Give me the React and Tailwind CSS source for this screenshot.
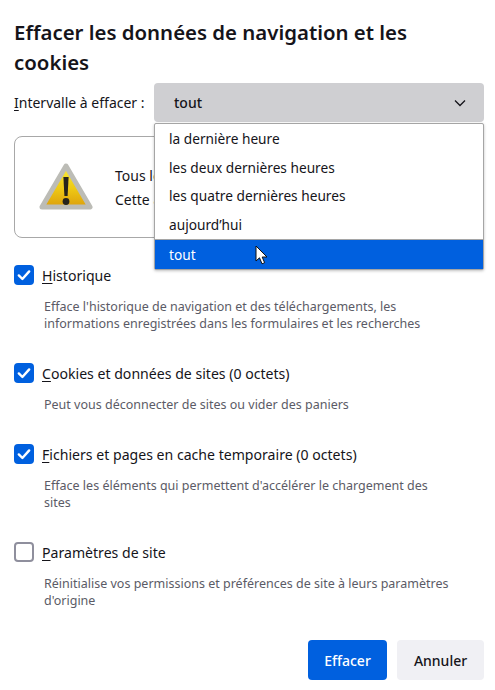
import React from "react";

function Check({ checked }) {
  if (!checked)
    return <span className="w-5 h-5 shrink-0 rounded-[4px] border-2 border-[#8f8f9d] bg-white" />;
  return (
    <span className="w-5 h-5 shrink-0 rounded-[4px] bg-[#0060df] flex items-center justify-center">
      <svg width="14" height="14" viewBox="0 0 14 14" fill="none">
        <path d="M1.8 7.4 L5.4 11 L12.2 3.4" stroke="white" strokeWidth="2.4" strokeLinecap="round" strokeLinejoin="round" />
      </svg>
    </span>
  );
}

function Item({ checked, k, rest, desc }) {
  return (
    <div className="mb-[31px]">
      <div className="flex items-center h-5 gap-2">
        <Check checked={checked} />
        <span className="pt-[2px] text-[14.1px] leading-5 text-[#15141a] whitespace-nowrap">
          <span className="underline underline-offset-2">{k}</span>
          {rest}
        </span>
      </div>
      <p className="mt-[13px] ml-[30px] w-[410px] text-[12.5px] leading-[17px] text-[#5b5b66]">{desc}</p>
    </div>
  );
}

function WarnIcon() {
  return (
    <svg width="56" height="50" viewBox="0 0 56 50">
      <defs>
        <linearGradient id="warnfill" x1="0" y1="0" x2="0" y2="1">
          <stop offset="0" stopColor="#f8ee3a" />
          <stop offset="0.55" stopColor="#eec914" />
          <stop offset="1" stopColor="#dc9f0c" />
        </linearGradient>
      </defs>
      <path d="M28 4 L52 45 H4 Z" fill="url(#warnfill)" stroke="#bcbcb6" strokeWidth="5" strokeLinejoin="round" />
      <path d="M25.4 15 h5.2 l-1 19 h-3.2 Z" fill="#26241c" />
      <circle cx="28" cy="39.5" r="3.4" fill="#26241c" />
    </svg>
  );
}

function Cursor() {
  return (
    <svg width="14" height="21" viewBox="0 0 14 21" className="absolute left-[100px] top-[5px]">
      <path d="M1 1 L1 16 L4.5 12.8 L7 18.8 L9.6 17.7 L7.2 12 L12 12 Z" fill="white" stroke="#111" strokeWidth="1" strokeLinejoin="round" />
    </svg>
  );
}

export default function App() {
  return (
    <div className="w-[495px] h-[690px] bg-white pl-[14px] pr-[11px] pt-[17px] overflow-hidden">
      <div className="font-['Noto_Sans','Open_Sans',sans-serif]">
        <h1 className="text-[20.4px] leading-[30px] font-semibold text-[#15141a] w-[440px]">
          Effacer les données de navigation et les cookies
        </h1>
        <div className="relative flex items-center h-[39px] mt-[6px]">
          <span className="w-[140px] shrink-0 text-[14px] text-[#15141a] whitespace-nowrap">
            <span className="underline underline-offset-2">I</span>ntervalle à effacer :
          </span>
          <div className="flex-1 h-[39px] rounded-[4px] bg-[#cfcfd2] flex items-center justify-between pl-5 pr-[18px] text-[14px] text-[#15141a] font-medium">
            <span>tout</span>
            <svg width="12" height="12" viewBox="0 0 12 12" fill="none">
              <path d="M1 3.5 L6 8.5 L11 3.5" stroke="#15141a" strokeWidth="1.3" />
            </svg>
          </div>
          <div className="absolute z-10 left-[140px] right-0 top-[40px] bg-white border border-[#a5a5a5] rounded-[2px] shadow-[0_1px_3px_rgba(0,0,0,0.25)] text-[13.7px] text-[#15141a]">
            <div className="px-[14px] leading-[20px] pt-[5px] pb-[4px]">la dernière heure</div>
            <div className="px-[14px] leading-[20px] pt-[5px] pb-[4px]">les deux dernières heures</div>
            <div className="px-[14px] leading-[20px] pt-[4px] pb-[5px]">les quatre dernières heures</div>
            <div className="px-[14px] leading-[20px] pt-[4px] pb-[3px]">aujourd’hui</div>
            <div className="relative h-[30px] mt-[1px] border-t border-[#a5a5a5] bg-[#0060df] text-white px-[14px] leading-[30px]">
              tout
              <Cursor />
            </div>
          </div>
        </div>
        <div className="h-[102px] mt-[14px] border border-[#a8a8a8] rounded-[8px] flex items-center">
          <div className="ml-[23px] mt-[-1px] flex"><WarnIcon /></div>
          <div className="ml-[21px] pt-[2px] text-[14px] leading-[24px] text-[#15141a]">
            <div>Tous les éléments sélectionnés seront effacés.</div>
            <div>Cette action est irréversible.</div>
          </div>
        </div>
        <div className="mt-[27px]">
          <Item checked k="H" rest="istorique" desc="Efface l'historique de navigation et des téléchargements, les informations enregistrées dans les formulaires et les recherches" />
          <Item checked k="C" rest="ookies et données de sites (0 octets)" desc="Peut vous déconnecter de sites ou vider des paniers" />
          <Item checked k="F" rest="ichiers et pages en cache temporaire (0 octets)" desc="Efface les éléments qui permettent d'accélérer le chargement des sites" />
          <Item k="P" rest="aramètres de site" desc="Réinitialise vos permissions et préférences de site à leurs paramètres d'origine" />
        </div>
        <div className="flex justify-end gap-[10px]">
          <button className="w-[79px] h-10 rounded-[4px] bg-[#0060df] text-white text-[14px] font-medium">Effacer</button>
          <button className="w-[87px] h-10 rounded-[4px] bg-[#f0f0f4] text-[#15141a] text-[14px] font-medium">Annuler</button>
        </div>
      </div>
    </div>
  );
}
